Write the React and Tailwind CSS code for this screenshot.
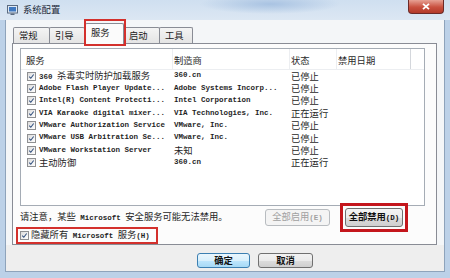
import React from "react";

const CJK_RE = /([\u3000-\u303f\u4e00-\u9fff\uff00-\uffef]+)/;

function Mixed({ s, cjkCls = "text-[9.3px]", latCls = "text-[7.5px]", bold = false }) {
  const parts = s.split(CJK_RE).filter(Boolean);
  return (
    <span className="whitespace-pre inline-flex items-baseline">
      {parts.map((p, i) =>
        CJK_RE.test(p) ? (
          <span key={i} className={`[font-family:'Noto_Sans_CJK_SC',sans-serif] leading-none ${cjkCls} ${bold ? "font-bold" : ""}`}>{p}</span>
        ) : (
          <span key={i} className={`[font-family:'Liberation_Mono',monospace] leading-none font-bold ${latCls}`}>{p}</span>
        )
      )}
    </span>
  );
}

function Check() {
  return (
    <span className="w-[9px] h-[9px] shrink-0 border border-[#8f9092] bg-[linear-gradient(135deg,#dcdcdc,#ffffff)] flex items-center justify-center">
      <svg viewBox="0 0 9 9" className="w-[9px] h-[9px]">
        <path d="M1.6 4.6 L3.6 6.8 L7.3 1.9" stroke="#2f4d7c" strokeWidth="1.3" fill="none" />
      </svg>
    </span>
  );
}

const rows = [
  ["360 杀毒实时防护加载服务", "360.cn", "已停止"],
  ["Adobe Flash Player Update...", "Adobe Systems Incorp...", "已停止"],
  ["Intel(R) Content Protecti...", "Intel Corporation", "已停止"],
  ["VIA Karaoke digital mixer...", "VIA Technologies, Inc.", "正在运行"],
  ["VMware Authorization Service", "VMware, Inc.", "已停止"],
  ["VMware USB Arbitration Se...", "VMware, Inc.", "已停止"],
  ["VMware Workstation Server", "未知", "已停止"],
  ["主动防御", "360.cn", "正在运行"],
];

function Tab({ label, w, selected }) {
  if (selected) {
    return (
      <div className={`relative z-10 ${w} h-[21px] -mb-[1px] border border-b-0 border-[#898c95] bg-[#fbfbfb] rounded-t-[2px] flex items-start pt-[4px] pl-[5px] text-[#222]`}>
        <Mixed s={label} />
        <div className="absolute left-[-2px] right-[-3px] top-[-5px] bottom-[-2px] border-2 border-[#d3302c]" />
      </div>
    );
  }
  return (
    <div className={`${w} h-[16px] border border-b-0 border-[#898c95] bg-[linear-gradient(180deg,#f4f4f4,#e4e4e4)] rounded-t-[2px] flex items-center pl-[5px] text-[#222] -ml-[1px]`}>
      <Mixed s={label} />
    </div>
  );
}

export default function App() {
  return (
    <div className="w-[450px] h-[278px] flex flex-col overflow-hidden bg-[#bcd1e8] text-[#1a1a1a]">
      {/* title bar */}
      <div className="h-[20px] flex items-start shrink-0 bg-[radial-gradient(ellipse_70px_10px_at_270px_4px,#a9c3e2,transparent),linear-gradient(180deg,#cfdff0,#dce7f3)]">
        <div className="h-[20px] flex items-center pl-[7px] gap-[5px]">
          <svg viewBox="0 0 11 10" className="w-[11px] h-[10px]">
            <rect x="0.5" y="0.5" width="10" height="7.5" fill="#dfe9f5" stroke="#5b6b80" />
            <rect x="2" y="2" width="7" height="4.5" fill="#3f78c0" />
            <rect x="3.5" y="8.5" width="4" height="1.5" fill="#5b6b80" />
          </svg>
          <Mixed s="系统配置" cjkCls="text-[9.3px] text-[#1c2a3a]" />
        </div>
        <div className="ml-auto mr-[6px] w-[36px] h-[14px] rounded-b-[4px] border border-t-0 border-[#6b2a28] bg-[linear-gradient(180deg,#e7a194,#c9503f_55%,#b33a2a)] flex items-center justify-center">
          <svg viewBox="0 0 8 7" className="w-[8px] h-[7px]">
            <path d="M1 0.8 L7 6.2 M7 0.8 L1 6.2" stroke="#ffffff" strokeWidth="1.8" />
          </svg>
        </div>
      </div>

      {/* client area */}
      <div className="flex-1 mx-[5px] mb-[6px] flex flex-col bg-[#f4f6f8] border border-t-0 border-[#8ea3bb]">
        {/* tabs */}
        <div className="h-[23px] shrink-0 flex items-end pl-[8px]">
          <Tab label="常规" w="w-[37px]" />
          <Tab label="引导" w="w-[36px]" />
          <Tab label="服务" w="w-[39px]" selected />
          <Tab label="启动" w="w-[37px]" />
          <Tab label="工具" w="w-[34px]" />
        </div>

        {/* panel */}
        <div className="ml-[6px] mr-[7px] h-[202px] shrink-0 border border-[#898c95] bg-[#fcfcfc] px-[7px] pt-[4px]">
          {/* list */}
          <div className="w-[405px] h-[158px] border border-[#a5acb5] bg-white">
            <div className="h-[21px] flex items-stretch text-[#2a2a2a] border-b border-[#eceef1]">
              <div className="w-[152px] pl-[5px] flex items-center pt-[4px] border-r border-[#eceef1]"><Mixed s="服务" /></div>
              <div className="w-[117px] pl-[1px] flex items-center pt-[4px] border-r border-[#eceef1]"><Mixed s="制造商" /></div>
              <div className="w-[47px] pl-[1px] flex items-center pt-[4px] border-r border-[#eceef1]"><Mixed s="状态" /></div>
              <div className="w-[74px] pl-[1px] flex items-center pt-[4px] border-r border-[#d4d7dc]"><Mixed s="禁用日期" /></div>
              <div className="flex-1" />
            </div>
            {rows.map(([a, b, c], i) => (
              <div key={i} className="h-[12.4px] flex items-center text-[#1f1f1f]">
                <div className="w-[152px] flex items-center pl-[6px] gap-[3px]">
                  <Check />
                  <Mixed s={a} />
                </div>
                <div className="w-[117px] pl-[1px] flex items-center"><Mixed s={b} /></div>
                <div className="w-[47px] pl-[1px] flex items-center"><Mixed s={c} /></div>
              </div>
            ))}
          </div>

          {/* bottom section */}
          <div className="w-[405px] flex items-start">
            <div className="flex flex-col">
              <div className="mt-[5px] h-[12px] flex items-center text-[#1f1f1f]">
                <Mixed s="请注意，某些 Microsoft 安全服务可能无法禁用。" />
              </div>
              <div className="mt-[4px] -ml-[4px] w-[142px] h-[17px] border-2 border-[#d3302c] flex items-center pl-[2px] gap-[2px] text-[#1f1f1f]">
                <Check />
                <Mixed s="隐藏所有 Microsoft 服务(H)" />
              </div>
            </div>
            <div className="ml-auto mr-[17px] -mt-[3px] flex items-center gap-[10px]">
              <div className="w-[65px] h-[17px] border border-[#b8bcc0] rounded-[3px] bg-[#f4f4f4] flex items-center justify-center text-[#a0a0a0]">
                <Mixed s="全部启用(E)" />
              </div>
              <div className="border-[3px] border-[#c4161c] p-[2px]">
                <div className="w-[58px] h-[19px] border border-[#707070] rounded-[3px] bg-[linear-gradient(180deg,#f4f4f4_0%,#ebebeb_50%,#dddddd_51%,#cfcfcf_100%)] flex items-center justify-center text-[#111]">
                  <Mixed s="全部禁用(D)" bold />
                </div>
              </div>
            </div>
          </div>
        </div>

        {/* button strip */}
        <div className="flex-1 bg-[#eeeeee] flex items-start pl-[191px] pt-[8px] gap-[8px]">
          <div className="w-[53px] h-[15px] border border-[#3c7fb1] rounded-[3px] bg-[linear-gradient(180deg,#eaf6fd_0%,#d9f0fc_50%,#bee6fd_51%,#a7d9f5_100%)] flex items-center justify-center text-[#111]">
            <Mixed s="确定" bold />
          </div>
          <div className="w-[55px] h-[15px] border border-[#707070] rounded-[3px] bg-[linear-gradient(180deg,#f2f2f2_0%,#ebebeb_50%,#dddddd_51%,#cfcfcf_100%)] flex items-center justify-center text-[#111]">
            <Mixed s="取消" bold />
          </div>
        </div>
      </div>
    </div>
  );
}
